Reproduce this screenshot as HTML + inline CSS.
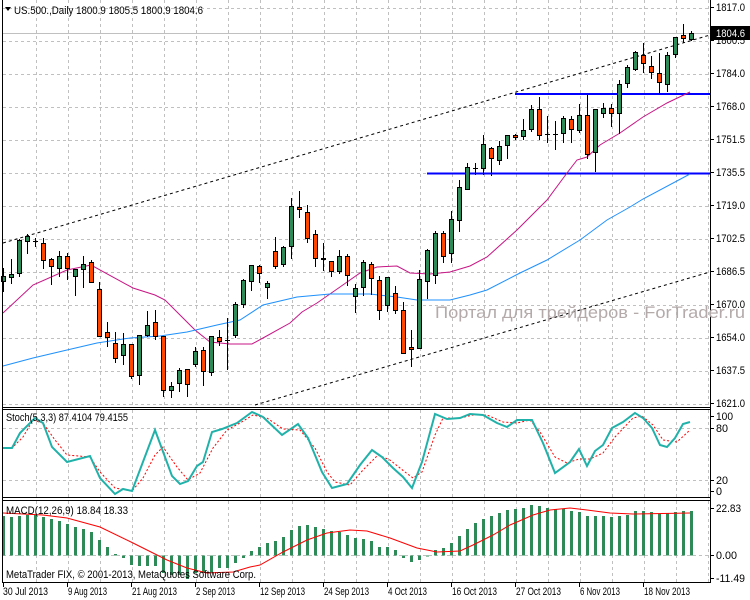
<!DOCTYPE html>
<html><head><meta charset="utf-8"><style>
html,body{margin:0;padding:0;background:#fff;width:750px;height:600px;overflow:hidden}
svg{display:block}
text{font-family:"Liberation Sans",sans-serif;font-size:11px;fill:#000}
</style></head><body>
<svg id="s" width="750" height="600" xmlns="http://www.w3.org/2000/svg">
<rect width="750" height="600" fill="#fff"/>
<g id="grid" stroke="#c0c0c0" stroke-width="1" stroke-dasharray="3,3" fill="none"></g>
<g id="ma"></g>
<g id="candles"></g>
<g id="osc"></g>
<g id="frame" stroke="#000" stroke-width="1" fill="none">
<line x1="2.5" y1="0" x2="2.5" y2="582"/>
<line x1="710.5" y1="0" x2="710.5" y2="582"/>
<line x1="2" y1="407.5" x2="711" y2="407.5"/>
<line x1="2" y1="409.5" x2="711" y2="409.5"/>
<line x1="2" y1="497.5" x2="711" y2="497.5"/>
<line x1="2" y1="500.5" x2="711" y2="500.5"/>
<line x1="2" y1="582.5" x2="711" y2="582.5"/>
</g>
<g id="labels"></g>
<text x="435" y="318" textLength="310" lengthAdjust="spacingAndGlyphs" style="font-size:17px;fill:#b4aaaa">Портал для трейдеров - ForTrader.ru</text>
<text x="14" y="14" textLength="189" lengthAdjust="spacingAndGlyphs">US.500.,Daily  1800.9 1805.5 1800.9 1804.6</text>
<path d="M5 7 L11 7 L8 11 Z" fill="#000"/>
<text x="6" y="421" textLength="122" lengthAdjust="spacingAndGlyphs">Stoch(5,3,3) 87.4104 79.4155</text>
<text x="6" y="514" textLength="122" lengthAdjust="spacingAndGlyphs">MACD(12,26,9) 18.84 18.33</text>
<text x="6" y="578" textLength="250" lengthAdjust="spacingAndGlyphs">MetaTrader FIX, © 2001-2013, MetaQuotes Software Corp.</text>
</svg>
<script>
var NS="http://www.w3.org/2000/svg",svg=document.getElementById('s');
function el(p,t,a){var e=document.createElementNS(NS,t);for(var k in a)e.setAttribute(k,a[k]);document.getElementById(p).appendChild(e);return e;}
function txt(p,x,y,s,len){var e=el(p,'text',{x:x,y:y});e.textContent=s;if(len){e.setAttribute('textLength',len);e.setAttribute('lengthAdjust','spacingAndGlyphs');}return e;}
for(var k=1;k<=22;k++){var x=4+32*k+0.5;el('grid','line',{x1:x,y1:0,x2:x,y2:407});el('grid','line',{x1:x,y1:410,x2:x,y2:497});el('grid','line',{x1:x,y1:501,x2:x,y2:582});}
for(var k=1;k<=12;k++){var y=8+33*k+0.5;el('grid','line',{x1:3,y1:y,x2:710,y2:y});}
el('grid','line',{x1:3,y1:8.5,x2:710,y2:8.5});
[428.5,480.5,555.5].forEach(function(y){el('grid','line',{x1:3,y1:y,x2:710,y2:y});});
el('ma','line',{x1:3,y1:33.5,x2:710,y2:33.5,stroke:'#c0c0c0','stroke-width':1});
el('ma','line',{x1:3,y1:243,x2:710,y2:35,stroke:'#000','stroke-dasharray':'3,3'});
el('ma','line',{x1:255,y1:405,x2:710,y2:272,stroke:'#000','stroke-dasharray':'3,3'});
el('ma','line',{x1:515,y1:94,x2:710,y2:94,stroke:'#0000ff','stroke-width':2});
el('ma','line',{x1:427,y1:173.5,x2:710,y2:173.5,stroke:'#0000ff','stroke-width':2});
function pl(p,pts,c,w,d){var a={points:pts.map(function(q){return q.join(',')}).join(' '),fill:'none',stroke:c,'stroke-width':w};if(d)a['stroke-dasharray']=d;el(p,'polyline',a);}
pl('ma',[[3,313],[33,285],[67,270],[91,265],[133,288],[155,295],[165,300],[185,320],[195,330],[210,342],[230,344],[252,344],[263,338],[290,323],[302,312],[317,303],[340,287],[360,273],[377,267],[397,266],[410,273],[430,274],[450,272],[470,266],[487,257],[517,230],[547,200],[567,173],[577,160],[587,157],[600,145],[620,133],[643,117],[667,103],[690,92]],'#c71585',1);
pl('ma',[[3,366],[33,358],[67,350],[97,343],[130,338],[160,336],[187,332],[217,325],[240,320],[263,305],[297,297],[330,294],[370,294],[397,297],[417,300],[450,300],[470,295],[487,290],[520,273],[547,260],[580,240],[607,220],[630,207],[643,199],[690,174]],'#1e90ff',1);
var C=[[276,282,268,292,'g'],[274,278,259,284,'g'],[240,274,239,277,'g'],[236,242,234,254,'g'],[241,241,238,247,'d'],[243,261,238,269,'r'],[259,267,258,285,'r'],[256,269,251,277,'g'],[256,269,253,280,'r'],[269,277,269,296,'g'],[264,270,256,288,'g'],[262,283,260,283,'r'],[289,337,282,337,'r'],[332,338,322,347,'r'],[343,359,332,363,'r'],[344,356,333,365,'g'],[344,377,344,379,'r'],[335,376,335,385,'g'],[325,336,311,337,'g'],[322,337,310,340,'r'],[336,391,336,397,'r'],[386,391,382,398,'g'],[370,384,368,392,'g'],[369,385,369,397,'r'],[351,365,347,367,'g'],[350,372,347,386,'r'],[336,373,336,376,'g'],[337,342,330,346,'r'],[340,340,318,370,'d'],[304,336,302,338,'g'],[280,305,279,308,'g'],[265,282,265,291,'g'],[266,274,265,283,'r'],[283,288,281,299,'g'],[251,267,237,269,'r'],[247,265,246,267,'g'],[206,247,198,259,'g'],[207,210,191,218,'r'],[212,239,205,243,'r'],[234,259,230,267,'r'],[258,260,243,271,'r'],[261,272,261,277,'r'],[256,272,250,274,'g'],[256,276,254,286,'r'],[288,297,284,313,'g'],[262,288,260,296,'g'],[264,279,262,295,'r'],[280,311,276,320,'r'],[277,306,277,312,'g'],[293,311,286,314,'r'],[310,354,302,354,'r'],[347,350,330,367,'r'],[279,349,270,349,'g'],[250,282,249,299,'g'],[233,276,231,284,'g'],[233,257,231,263,'r'],[219,254,211,263,'g'],[187,221,180,232,'g'],[167,190,163,190,'g'],[168,168,163,175,'d'],[144,169,135,175,'g'],[148,159,147,176,'r'],[146,161,141,165,'g'],[135,146,135,159,'g'],[135,138,134,140,'r'],[130,137,119,140,'g'],[109,130,105,132,'g'],[109,136,97,140,'r'],[134,136,116,143,'d'],[134,134,121,150,'d'],[118,134,116,143,'g'],[119,130,116,143,'r'],[115,131,104,133,'g'],[115,155,95,159,'r'],[109,153,109,172,'g'],[108,114,103,118,'g'],[108,114,104,127,'r'],[84,114,80,134,'g'],[67,84,65,88,'g'],[52,70,51,71,'g'],[55,64,43,73,'r'],[66,73,56,79,'r'],[73,83,53,94,'r'],[55,85,52,92,'g'],[37,55,37,58,'g'],[35,39,24,43,'r'],[33,40,31,41,'g']];
C.forEach(function(c,i){var x=3+8*i;
 el('candles','line',{x1:x+0.5,y1:c[2],x2:x+0.5,y2:c[3],stroke:'#000','stroke-width':1});
 if(c[4]=='d'){el('candles','line',{x1:x-2,y1:c[0]+0.5,x2:x+3,y2:c[0]+0.5,stroke:'#000','stroke-width':1});}
 else{var h=Math.max(c[1]-c[0],2);el('candles','rect',{x:x-1.5,y:c[0]+0.5,width:4,height:h-1,fill:c[4]=='g'?'#2e8b57':'#ff4500',stroke:'#000','stroke-width':1});}
});
var M=[516,517,516,515,515,517,519,521,524,527,529,532,540,547,554,558,565,566,566,566,573,575,575,579,573,573,573,568,568,563,558,551,547,543,541,537,530,526,525,527,529,531,532,535,538,539,541,547,547,550,558,562,560,556,550,548,543,536,529,523,519,516,513,510,509,508,505,506,508,509,509,511,512,516,516,516,517,516,515,511,511,512,514,513,512,511,511];
M.forEach(function(v,i){var x=3+8*i-1;var z=555.5;var y0=Math.min(v,z),h=Math.abs(v-z);if(h<1)h=1;el('osc','rect',{x:x,y:y0,width:3,height:h,fill:'#2e8b57'});});
pl('osc',[[3,513],[43,515],[67,518],[100,527],[133,543],[167,560],[187,568],[207,573],[233,572],[250,567],[260,565],[283,552],[307,540],[327,533],[350,530],[367,531],[390,538],[417,548],[437,552],[460,551],[473,545],[493,535],[510,525],[517,522],[533,515],[550,510],[570,508],[587,510],[610,513],[633,514],[690,513]],'#ff0000',1);
pl('osc',[[3,448],[12,448],[23,437],[33,420],[43,423],[55,440],[67,455],[90,457],[100,472],[115,488],[132,491],[143,478],[155,455],[163,447],[177,467],[188,480],[200,473],[213,448],[227,430],[240,423],[253,415],[267,418],[283,429],[300,430],[315,448],[327,472],[335,482],[350,485],[363,470],[378,455],[390,460],[405,472],[413,478],[422,472],[435,435],[443,418],[460,418],[473,415],[487,415],[503,422],[517,423],[530,420],[540,432],[555,457],[567,463],[579,459],[590,459],[603,453],[615,437],[633,418],[642,416],[653,425],[663,440],[677,442],[690,430]],'#ff0000',1,'2,2');
pl('osc',[[3,448],[12,448],[20,433],[35,418],[43,423],[52,447],[67,462],[90,456],[100,478],[115,494],[123,489],[132,491],[155,430],[172,476],[180,484],[188,481],[197,466],[203,462],[212,432],[222,429],[237,423],[252,412],[263,417],[282,435],[298,424],[308,438],[322,472],[332,488],[347,484],[360,465],[372,450],[382,457],[393,468],[403,477],[412,488],[422,462],[435,414],[447,419],[460,418],[470,414],[483,415],[497,423],[507,427],[517,420],[532,420],[543,443],[555,473],[570,462],[579,449],[587,466],[595,451],[603,445],[612,428],[623,422],[635,413],[643,418],[652,428],[660,445],[667,447],[675,438],[683,424],[690,422]],'#20b2aa',2);
var P=['1817.0','1800.5','1784.0','1768.0','1751.5','1735.5','1719.0','1702.5','1686.5','1670.0','1654.0','1637.5','1621.0'];
P.forEach(function(s,i){var y=7+33*i;el('labels','line',{x1:711,y1:y+0.5,x2:714,y2:y+0.5,stroke:'#000'});txt('labels',716,y+4,s,29);});
el('labels','rect',{x:711,y:26,width:39,height:14,fill:'#000'});
var t=txt('labels',716,37,'1804.6',29);t.setAttribute('style','fill:#fff');
[['100',416,17],['80',428,12],['20',480,12],['0',491,6],['22.83',508,25],['0.00',555,21],['-11.49',578,29]].forEach(function(a){el('labels','line',{x1:711,y1:a[1]+0.5,x2:714,y2:a[1]+0.5,stroke:'#000'});txt('labels',716,a[1]+4,a[0],a[2]);});
var D=[['30 Jul 2013',45],['9 Aug 2013',39],['21 Aug 2013',45],['2 Sep 2013',39],['12 Sep 2013',45],['24 Sep 2013',45],['4 Oct 2013',39],['16 Oct 2013',45],['27 Oct 2013',45],['6 Nov 2013',40],['18 Nov 2013',46]];
D.forEach(function(s,i){var x=3+64*i;el('labels','line',{x1:x+0.5,y1:583,x2:x+0.5,y2:587,stroke:'#000'});txt('labels',x+(i?1:0),595,s[0],s[1]);});
</script>
</body></html>
